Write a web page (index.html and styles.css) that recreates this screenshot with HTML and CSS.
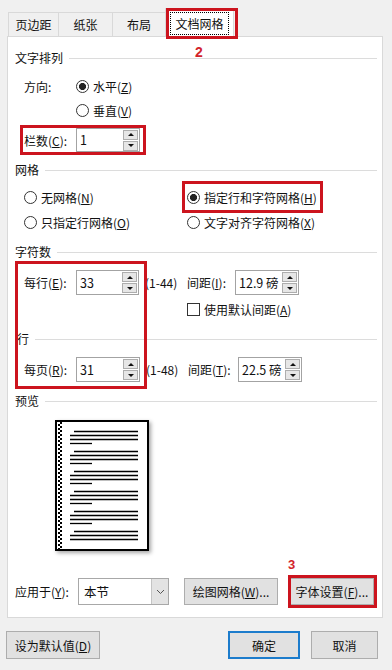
FILE: index.html
```html
<!DOCTYPE html>
<html lang="zh-CN">
<head>
    <meta charset="UTF-8">
    <meta name="viewport" content="width=device-width, initial-scale=1.0">
    <title>页面设置 - 文档网格</title>
    <link rel="stylesheet" href="styles.css">
</head>
<body>
    <div class="dialog">
        <div class="tabs">
            <div class="tab tab-first">页边距</div>
            <div class="tab tab-paper">纸张</div>
            <div class="tab tab-layout">布局</div>
            <div class="tab tab-active"><span class="focus">文档网格</span></div>
        </div>

        <div class="panel">
            <div class="legend legend-text"><span>文字排列</span><i></i></div>
            <div class="row row-dir">
                <span class="lbl">方向:</span>
                <span class="radio checked"><b></b>水平(<u>Z</u>)</span>
            </div>
            <div class="row row-vert">
                <span class="radio"><b></b>垂直(<u>V</u>)</span>
            </div>
            <div class="row row-cols">
                <span class="lbl">栏数(<u>C</u>):</span>
                <div class="spin spin-cols"><span class="val">1</span><div class="arrows"><span class="up"></span><span class="down"></span></div></div>
            </div>

            <div class="legend legend-grid"><span>网格</span><i></i></div>
            <div class="row row-grid1">
                <span class="col-left"><span class="radio"><b></b>无网格(<u>N</u>)</span></span>
                <span class="radio checked"><b></b>指定行和字符网格(<u>H</u>)</span>
            </div>
            <div class="row row-grid2">
                <span class="col-left"><span class="radio"><b></b>只指定行网格(<u>O</u>)</span></span>
                <span class="radio"><b></b>文字对齐字符网格(<u>X</u>)</span>
            </div>

            <div class="legend legend-chars"><span>字符数</span><i></i></div>
            <div class="row row-chars">
                <span class="col-left">
                    <span class="lbl">每行(<u>E</u>):</span>
                    <div class="spin spin-num"><span class="val">33</span><div class="arrows"><span class="up"></span><span class="down"></span></div></div>
                    <span class="range">(1-44)</span>
                </span>
                <span class="lbl lbl-pitch-i">间距(<u>I</u>):</span>
                <div class="spin spin-pitch"><span class="val">12.9 磅</span><div class="arrows"><span class="up"></span><span class="down"></span></div></div>
            </div>
            <div class="row row-check">
                <span class="check"><b></b>使用默认间距(<u>A</u>)</span>
            </div>

            <div class="legend legend-lines"><span>行</span><i></i></div>
            <div class="row row-lines">
                <span class="col-left col-left-wide">
                    <span class="lbl">每页(<u>R</u>):</span>
                    <div class="spin spin-num2"><span class="val">31</span><div class="arrows"><span class="up"></span><span class="down"></span></div></div>
                    <span class="range">(1-48)</span>
                </span>
                <span class="lbl lbl-pitch-t">间距(<u>T</u>):</span>
                <div class="spin spin-pitch"><span class="val">22.5 磅</span><div class="arrows"><span class="up"></span><span class="down"></span></div></div>
            </div>

            <div class="legend legend-preview"><span>预览</span><i></i></div>
            <div class="preview">
                <div class="page">
                    <svg width="90" height="127" viewBox="0 0 90 127">
                        <defs>
                            <g id="para" stroke="#000" stroke-width="1.3">
                                <line x1="17" y1="9.5" x2="81" y2="9.5"/>
                                <line x1="13" y1="13.5" x2="81" y2="13.5"/>
                                <line x1="13" y1="17.5" x2="81" y2="17.5"/>
                                <line x1="13" y1="21.5" x2="35" y2="21.5"/>
                            </g>
                        </defs>
                        <use href="#para"/>
                        <use href="#para" y="20"/>
                        <use href="#para" y="40"/>
                        <use href="#para" y="60"/>
                        <use href="#para" y="80"/>
                        <g stroke="#000" stroke-width="1.3">
                            <line x1="17" y1="109.5" x2="81" y2="109.5"/>
                            <line x1="13" y1="113.5" x2="81" y2="113.5"/>
                            <line x1="13" y1="117.5" x2="81" y2="117.5"/>
                        </g>
                    </svg>
                </div>
            </div>

            <div class="row row-apply">
                <span class="lbl lbl-apply">应用于(<u>Y</u>):</span>
                <div class="select">
                    <span class="val">本节</span>
                    <span class="drop">
                        <svg width="9" height="6" viewBox="0 0 9 6"><path d="M1 1l3.5 3.5L8 1" fill="none" stroke="#555" stroke-width="1"/></svg>
                    </span>
                </div>
                <button class="btn btn-draw">绘图网格(<u>W</u>)...</button>
                <button class="btn btn-font">字体设置(<u>F</u>)...</button>
            </div>
        </div>

        <div class="footer">
            <button class="btn btn-default">设为默认值(<u>D</u>)</button>
            <button class="btn btn-ok">确定</button>
            <button class="btn btn-cancel">取消</button>
        </div>

        <!-- red annotation marks -->
        <div class="mark mark-tab"></div>
        <div class="num num-2">2</div>
        <div class="mark mark-cols"></div>
        <div class="mark mark-grid"></div>
        <div class="mark mark-count"></div>
        <div class="num num-3">3</div>
        <div class="mark mark-font"></div>
    </div>
</body>
</html>
```

FILE: styles.css
```css
* {
    box-sizing: border-box;
}
body {
    margin: 0;
    background-color: #f0f0f0;
    font-family: "Noto Sans CJK SC", "Microsoft YaHei", sans-serif;
    font-size: 12px;
    color: #111;
}
.dialog {
    position: relative;
    width: 392px;
    height: 670px;
}

/* tabs */
.tabs {
    display: flex;
    align-items: flex-end;
    padding: 8px 0 0 8px;
}
.tab {
    height: 24px;
    line-height: 23px;
    text-align: center;
    border: 1px solid #d9d9d9;
    border-left: none;
    border-bottom: none;
    background-color: #f0f0f0;
}
.tab-first {
    width: 51px;
    border-left: 1px solid #d9d9d9;
}
.tab-paper {
    width: 54px;
}
.tab-layout {
    width: 53px;
}
.tab-active {
    position: relative;
    z-index: 1;
    width: 69px;
    height: 29px;
    margin-left: -1px;
    margin-bottom: -1px;
    border-left: 1px solid #d9d9d9;
    background-color: #fff;
}
.focus {
    display: block;
    margin: 3px 4px;
    height: 23px;
    line-height: 21px;
    border: 1px dotted #000;
}

/* panel */
.panel {
    margin-left: 7px;
    width: 376px;
    border: 1px solid #d9d9d9;
    background-color: #fff;
    padding: 0 5px 12px 7px;
}
.legend {
    display: flex;
    align-items: center;
    height: 16px;
    line-height: 16px;
}
.legend i {
    flex: 1;
    height: 1px;
    margin-left: 6px;
    background-color: #dcdcdc;
}
.legend-text {
    margin-top: 13px;
}
.legend-grid {
    margin-top: 10px;
}
.legend-chars {
    margin-top: 12px;
}
.legend-lines {
    margin-top: 14px;
}
.legend-lines span {
    padding-left: 2px;
}
.legend-preview {
    margin-top: 11px;
}

.row {
    display: flex;
    align-items: center;
    padding-left: 9px;
    white-space: nowrap;
}
.lbl {
    display: inline-block;
    width: 52px;
}
.row-dir {
    height: 24px;
    margin-top: 8px;
}
.row-vert {
    height: 24px;
    padding-left: 61px;
}
.row-cols {
    height: 24px;
    margin-top: 6px;
}
.row-grid1 {
    height: 20px;
    margin-top: 9px;
}
.row-grid2 {
    height: 20px;
    margin-top: 5px;
}
.col-left {
    display: flex;
    align-items: center;
    width: 163px;
}
.col-left-wide {
    width: 164px;
}
.row-chars {
    height: 25px;
    margin-top: 10px;
}
.row-check {
    height: 16px;
    margin-top: 6px;
    padding-left: 172px;
}
.row-lines {
    height: 25px;
    margin-top: 10px;
}
.range {
    margin-left: 6px;
}
.lbl-pitch-i {
    width: 48px;
}
.lbl-pitch-t {
    width: 50px;
}

/* radio + checkbox */
.radio,
.check {
    display: inline-flex;
    align-items: center;
}
.radio b,
.check b {
    display: inline-block;
    width: 13px;
    height: 13px;
    margin-right: 4px;
    border: 1px solid #333;
    background-color: #fff;
}
.radio b {
    border-radius: 50%;
}
.radio.checked b {
    background: radial-gradient(circle, #222 0 3.3px, #fff 3.8px);
}

/* spin boxes */
.spin {
    display: flex;
    align-items: center;
    justify-content: space-between;
    height: 25px;
    border: 1px solid #a3a3a3;
    background-color: #fff;
    padding: 0 1px 0 3px;
}
.spin-cols {
    width: 64px;
    height: 24px;
}
.spin-num {
    width: 63px;
}
.spin-num2 {
    width: 64px;
}
.spin-pitch {
    width: 64px;
}
.val {
    line-height: 16px;
    font-size: 12.5px;
}
.arrows {
    display: flex;
    flex-direction: column;
    gap: 1px;
}
.arrows span {
    display: flex;
    align-items: center;
    justify-content: center;
    width: 15px;
    height: 10px;
    border: 1px solid #adadad;
    background-color: #e6e6e6;
}
.arrows span::after {
    content: "";
    border-left: 3px solid transparent;
    border-right: 3px solid transparent;
}
.arrows .up::after {
    border-bottom: 3px solid #111;
}
.arrows .down::after {
    border-top: 3px solid #111;
}

/* preview */
.preview {
    margin-top: 11px;
    padding-left: 40px;
}
.page {
    width: 94px;
    height: 131px;
    border: 2px solid #000;
    background-color: #fff;
    box-shadow: 2px 2px 4px rgba(0, 0, 0, 0.35);
    background-image: repeating-conic-gradient(#000 0 25%, #fff 0 50%);
    background-size: 4px 4px;
    background-repeat: repeat-y;
    background-position: 1px 0;
}
.page svg {
    display: block;
    background: linear-gradient(to right, transparent 0 5px, #fff 5px);
}

/* apply row */
.row-apply {
    height: 27px;
    margin-top: 27px;
    padding-left: 0;
}
.lbl-apply {
    width: 63px;
}
.select {
    display: flex;
    align-items: stretch;
    width: 91px;
    height: 27px;
    border: 1px solid #a8a8a8;
    background-color: #fff;
}
.select .val {
    flex: 1;
    padding-left: 5px;
    align-self: center;
}
.drop {
    display: flex;
    align-items: center;
    justify-content: center;
    width: 17px;
    background-color: #e3e3e3;
    border-left: 1px solid #c4c4c4;
}

/* buttons */
.btn {
    height: 27px;
    padding: 0;
    font: inherit;
    color: #111;
    background-color: #e1e1e1;
    border: 1px solid #adadad;
}
.btn-draw {
    width: 94px;
    margin-left: 15px;
}
.btn-font {
    width: 84px;
    margin-left: 12px;
}
.footer {
    display: flex;
    margin-top: 13px;
    padding-left: 6px;
}
.footer .btn {
    height: 28px;
}
.btn-default {
    width: 94px;
}
.btn-ok {
    width: 72px;
    margin-left: 128px;
    border: 2px solid #1c7ccc;
}
.btn-cancel {
    width: 67px;
    margin-left: 11px;
}

/* red annotations */
.mark {
    position: absolute;
    z-index: 2;
    border: 3px solid #cc141e;
}
.mark-tab {
    left: 166px;
    top: 8px;
    width: 72px;
    height: 31px;
}
.mark-cols {
    left: 20px;
    top: 125px;
    width: 126px;
    height: 30px;
}
.mark-grid {
    left: 182px;
    top: 181px;
    width: 141px;
    height: 32px;
}
.mark-count {
    left: 15px;
    top: 261px;
    width: 132px;
    height: 128px;
}
.mark-font {
    left: 288px;
    top: 575px;
    width: 89px;
    height: 33px;
}
.num {
    position: absolute;
    z-index: 2;
    font-family: "Liberation Sans", Arial, sans-serif;
    font-weight: bold;
    color: #d2232a;
    line-height: 18px;
}
.num-2 {
    left: 195px;
    top: 43px;
    font-size: 14px;
}
.num-3 {
    left: 288px;
    top: 556px;
    font-size: 13px;
}
```
